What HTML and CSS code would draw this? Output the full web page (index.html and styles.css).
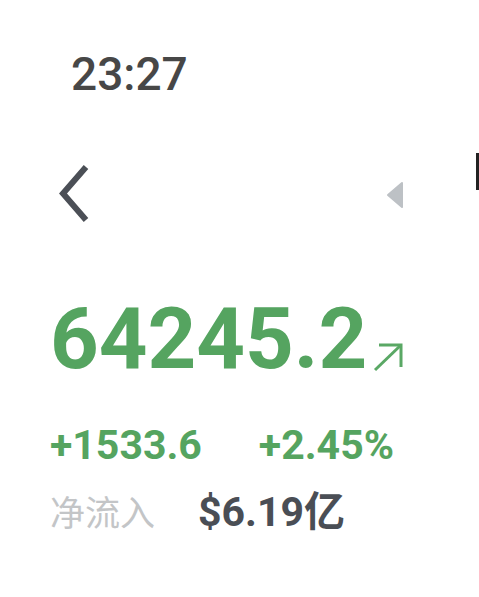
FILE: index.html
```html
<!DOCTYPE html>
<html lang="zh-CN">
<head>
    <meta charset="utf-8">
    <title>行情</title>
    <link rel="stylesheet" href="styles.css">
</head>
<body>
    <div class="status-bar">
        <span class="clock">23:27</span>
    </div>

    <div class="nav-bar">
        <svg class="back-icon" width="30" height="58" viewBox="0 0 30 58">
            <polyline points="27,2 4,28.5 27,55" fill="none" stroke="#4b4f56" stroke-width="6"/>
        </svg>
        <div class="nav-right">
            <svg class="collapse-icon" width="18" height="28" viewBox="0 0 18 28">
                <polygon points="16,2 2,14 16,26" fill="#bdc1c5" stroke="#bdc1c5" stroke-width="2" stroke-linejoin="round"/>
            </svg>
            <span class="edge-mark"></span>
        </div>
    </div>

    <div class="quote">
        <div class="price-row">
            <span class="price">64245.2</span>
            <svg class="trend-icon" width="32" height="30" viewBox="0 0 32 30">
                <polyline points="7,3 29,3 29,25" fill="none" stroke="#5aa865" stroke-width="3"/>
                <line x1="29" y1="3" x2="3" y2="28" stroke="#5aa865" stroke-width="3"/>
            </svg>
        </div>

        <div class="change-row">
            <span class="change">+1533.6</span>
            <span class="change">+2.45%</span>
        </div>

        <div class="flow-row">
            <span class="flow-label">净流入</span>
            <span class="flow-value">$6.19亿</span>
        </div>
    </div>
</body>
</html>
```

FILE: styles.css
```css
body {
    margin: 0;
    background-color: #fff;
    font-family: Roboto, "Noto Sans CJK SC", sans-serif;
    width: 479px;
    height: 597px;
    overflow: hidden;
}

.status-bar {
    padding: 51px 0 0 71px;
    height: 62px;
}

.clock {
    font-size: 46px;
    line-height: 46px;
    font-weight: 500;
    color: #474747;
}

.nav-bar {
    display: flex;
    justify-content: space-between;
    align-items: flex-start;
    padding: 40px 0 0 59px;
    height: 70px;
}

.back-icon {
    display: block;
    margin-top: 12px;
}

.nav-right {
    display: flex;
    align-items: flex-start;
}

.collapse-icon {
    display: block;
    margin-top: 28px;
    margin-right: 72px;
}

.edge-mark {
    display: block;
    width: 3px;
    height: 37px;
    background-color: #222;
}

.quote {
    padding: 73px 0 0 50px;
}

.price-row {
    display: flex;
    align-items: flex-end;
}

.price {
    font-size: 85px;
    line-height: 86px;
    font-weight: 700;
    color: #55a460;
}

.trend-icon {
    display: block;
    margin: 0 0 10px 5px;
}

.change-row {
    display: flex;
    gap: 57px;
    margin-top: 43px;
}

.change {
    font-size: 41px;
    line-height: 41px;
    font-weight: 700;
    color: #55a460;
}

.flow-row {
    display: flex;
    align-items: baseline;
    gap: 43px;
    margin-top: 24px;
}

.flow-label {
    font-size: 35px;
    line-height: 44px;
    color: #c3c5c7;
}

.flow-value {
    font-size: 41px;
    line-height: 44px;
    font-weight: 700;
    color: #4a4e55;
}
```
